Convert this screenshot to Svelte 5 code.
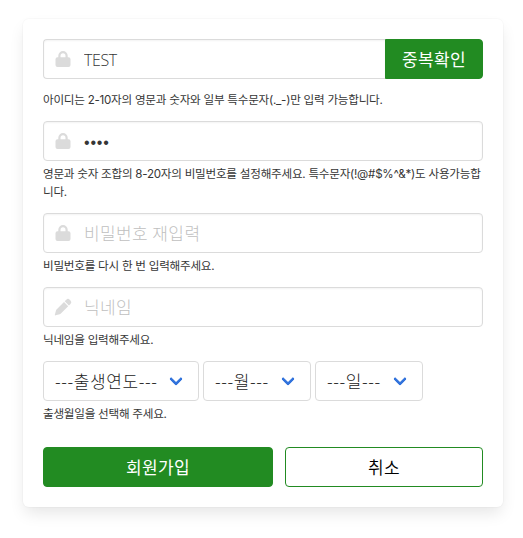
<script>
  let userId = 'TEST';
  let password = 'abcd';
  let passwordCheck = '';
  let nickname = '';
</script>

{#snippet lock()}
  <svg class="icon" viewBox="0 0 15 16" aria-hidden="true">
    <path d="M2.800 6.200V4.700a4.700 4.700 0 0 1 9.400 0v1.500h.8a2 2 0 0 1 2 2V14a2 2 0 0 1-2 2H2a2 2 0 0 1-2-2V8.200a2 2 0 0 1 2-2zM5 6.200h5V4.700a2.500 2.500 0 0 0-5 0z" />
  </svg>
{/snippet}

<div class="page">
  <form class="box">
    <div class="field">
      <div class="addons">
        <div class="control">
          {@render lock()}
          <input class="latin" type="text" value={userId} />
        </div>
        <button class="button check" type="button">중복확인</button>
      </div>
      <p class="help first">아이디는 2-10자의 영문과 숫자와 일부 특수문자(._-)만 입력 가능합니다.</p>
    </div>

    <div class="field">
      <div class="control">
        {@render lock()}
        <input class="password" type="password" value={password} autocomplete="off" />
      </div>
      <p class="help">영문과 숫자 조합의 8-20자의 비밀번호를 설정해주세요. 특수문자(!@#$%^&*)도 사용가능합니다.</p>
    </div>

    <div class="field">
      <div class="control">
        {@render lock()}
        <input type="text" placeholder="비밀번호 재입력" value={passwordCheck} />
      </div>
      <p class="help">비밀번호를 다시 한 번 입력해주세요.</p>
    </div>

    <div class="field">
      <div class="control">
        <svg class="icon" viewBox="0 0 16 16" aria-hidden="true">
          <path d="M11.300.7a2.400 2.400 0 0 1 3.400 0l.8.8a2.400 2.400 0 0 1 0 3.400l-1.600 1.600-4.200-4.200zM9 3l4.200 4.200-7.600 7.600a2 2 0 0 1-.9.500L.6 16.300a.5.500 0 0 1-.7-.7l1.100-4.100a2 2 0 0 1 .5-.9z" />
        </svg>
        <input type="text" placeholder="닉네임" value={nickname} />
      </div>
      <p class="help">닉네임을 입력해주세요.</p>
    </div>

    <div class="field">
      <div class="selects">
        <div class="select year">
          <select><option>---출생연도---</option></select>
        </div>
        <div class="select">
          <select><option>---월---</option></select>
        </div>
        <div class="select">
          <select><option>---일---</option></select>
        </div>
      </div>
      <p class="help">출생월일을 선택해 주세요.</p>
    </div>

    <div class="actions">
      <button class="button join" type="button">회원가입</button>
      <button class="button cancel" type="button">취소</button>
    </div>
  </form>
</div>

<style>
  :global(body) {
    background: #fff;
  }

  .page {
    box-sizing: border-box;
    min-height: 538px;
    padding: 19px 20px 31px 23px;
  }

  .box {
    box-sizing: border-box;
    width: 480px;
    height: 488px;
    padding: 20px;
    border-radius: 6px;
    background: #fff;
    box-shadow: 0 8px 16px -2px rgba(10, 10, 10, 0.1), 0 0 0 1px rgba(10, 10, 10, 0.02);
    color: #363636;
    font-family: 'Noto Sans CJK KR', sans-serif;
    font-size: 16px;
  }

  .field {
    margin-bottom: 12px;
  }

  .addons,
  .selects,
  .actions {
    display: flex;
  }

  .control {
    box-sizing: border-box;
    display: flex;
    align-items: center;
    flex: 1;
    height: 40px;
    border: 1px solid #dbdbdb;
    border-radius: 4px;
    box-shadow: inset 0 1px 2px rgba(10, 10, 10, 0.05);
  }

  .addons .control {
    border-right: 0;
    border-radius: 4px 0 0 4px;
  }

  .icon {
    flex: none;
    width: 38px;
    height: 16px;
    fill: #dbdbdb;
    overflow: visible;
  }

  input {
    flex: 1;
    min-width: 0;
    height: 38px;
    padding: 0 0 2px 2px;
    border: 0;
    outline: 0;
    background: transparent;
    color: #363636;
    font: 300 17px 'Noto Sans CJK KR', sans-serif;
    letter-spacing: 0.4px;
  }

  input.latin {
    padding: 2px 0 0 2px;
    font: 350 16px 'Open Sans', sans-serif;
    letter-spacing: -0.4px;
  }

  input.password {
    padding-top: 5px;
    font: 400 16px 'Liberation Sans', sans-serif;
    letter-spacing: 0.8px;
  }

  input::placeholder {
    color: #bfbfbf;
    opacity: 1;
  }

  .help {
    margin: 4px 0 0;
    font-family: Inter, 'Noto Sans CJK KR', sans-serif;
    font-size: 11.6px;
    line-height: 18px;
    letter-spacing: -0.25px;
    word-break: break-all;
  }

  .help.first {
    margin-top: 12px;
  }

  .button {
    box-sizing: border-box;
    height: 40px;
    padding: 0 0 2px;
    border: 1px solid #228b22;
    border-radius: 4px;
    background: #228b22;
    color: #fff;
    font: 400 17px 'Noto Sans CJK KR', sans-serif;
    letter-spacing: 0.4px;
  }

  .check {
    width: 98px;
    border-radius: 0 4px 4px 0;
  }

  .selects {
    gap: 4px;
  }

  .select {
    position: relative;
    width: 108px;
    height: 40px;
  }

  .select.year {
    width: 156px;
  }

  .select::after {
    content: '';
    position: absolute;
    top: 13px;
    right: 18px;
    box-sizing: border-box;
    width: 10px;
    height: 10px;
    border: 3px solid #3273dc;
    border-top: 0;
    border-right: 0;
    border-radius: 2px;
    transform: rotate(-45deg);
    pointer-events: none;
  }

  select {
    box-sizing: border-box;
    width: 100%;
    height: 40px;
    padding: 0 0 2px 11px;
    border: 1px solid #dbdbdb;
    border-radius: 4px;
    appearance: none;
    background: #fff;
    color: #222;
    font: 300 17px 'Noto Sans CJK KR', sans-serif;
    letter-spacing: 0.6px;
  }

  .actions {
    gap: 12px;
    margin-top: 24px;
  }

  .join {
    width: 230px;
  }

  .cancel {
    flex: 1;
    background: #fff;
    color: #000;
    font-weight: 350;
  }
</style>
